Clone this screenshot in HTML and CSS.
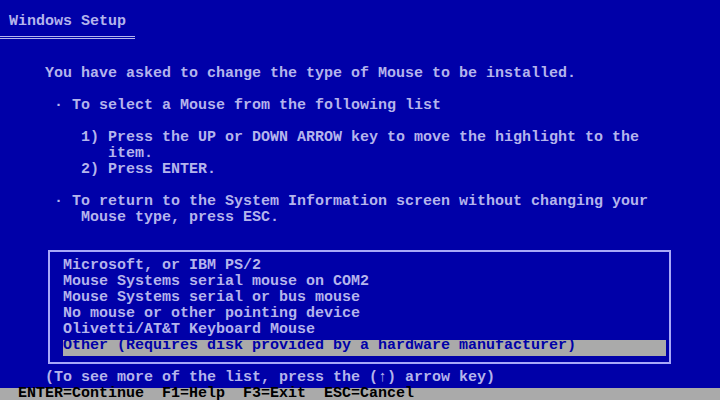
FILE: index.html
```html
<!DOCTYPE html>
<html>
<head>
<meta charset="utf-8">
<title>Windows Setup</title>
<link rel="stylesheet" href="styles.css">
</head>
<body>
<div class="screen">
  <div class="row"></div>
  <div class="row c1">Windows Setup</div>
  <div class="row"><div class="dbl"></div></div>
  <div class="row"></div>
  <div class="row c5">You have asked to change the type of Mouse to be installed.</div>
  <div class="row"></div>
  <div class="row c6"><span class="bul">·</span>To select a Mouse from the following list</div>
  <div class="row"></div>
  <div class="row c9">1) Press the UP or DOWN ARROW key to move the highlight to the</div>
  <div class="row c12">item.</div>
  <div class="row c9">2) Press ENTER.</div>
  <div class="row"></div>
  <div class="row c6"><span class="bul">·</span>To return to the System Information screen without changing your</div>
  <div class="row c9">Mouse type, press ESC.</div>
  <div class="row"></div>
  <div class="listbox">
    <div class="item">Microsoft, or IBM PS/2</div>
    <div class="item">Mouse Systems serial mouse on COM2</div>
    <div class="item">Mouse Systems serial or bus mouse</div>
    <div class="item">No mouse or other pointing device</div>
    <div class="item">Olivetti/AT&amp;T Keyboard Mouse</div>
    <div class="item sel">Other (Requires disk provided by a hardware manufacturer)</div>
  </div>
  <div class="row c5">(To see more of the list, press the (↑) arrow key)</div>
  <div class="status">ENTER=Continue  F1=Help  F3=Exit  ESC=Cancel</div>
</div>
</body>
</html>
```
FILE: styles.css
```css
html, body {
  margin: 0;
  padding: 0;
  background: #0000a8;
}
.screen {
  width: 720px;
  height: 400px;
  overflow: hidden;
  background: #0000a8;
  color: #b4b4ec;
  font-family: "Liberation Mono", "DejaVu Sans Mono", monospace;
  font-weight: bold;
  font-size: 15px;
  line-height: 12px;
}
.row, .item, .status {
  height: 16px;
  white-space: pre;
}
.c1 { padding-left: 9px; }
.c5 { padding-left: 45px; }
.c6 { padding-left: 54px; }
.c9 { padding-left: 81px; }
.c12 { padding-left: 108px; }
.bul {
  display: inline-block;
  width: 18px;
}
.dbl {
  width: 135px;
  height: 1px;
  margin-top: 4px;
  border-top: 1px solid #b4b4ec;
  border-bottom: 1px solid #b4b4ec;
}
.listbox {
  width: 603px;
  margin: 6px 0 8px 48px;
  padding: 8px 3px 6px 13px;
  border: 2px solid #a8a8f8;
}
.sel {
  background: #aaaaaa;
  color: #0000a8;
}
.status {
  padding-left: 18px;
  background: #aaaaaa;
  color: #000000;
}
```
